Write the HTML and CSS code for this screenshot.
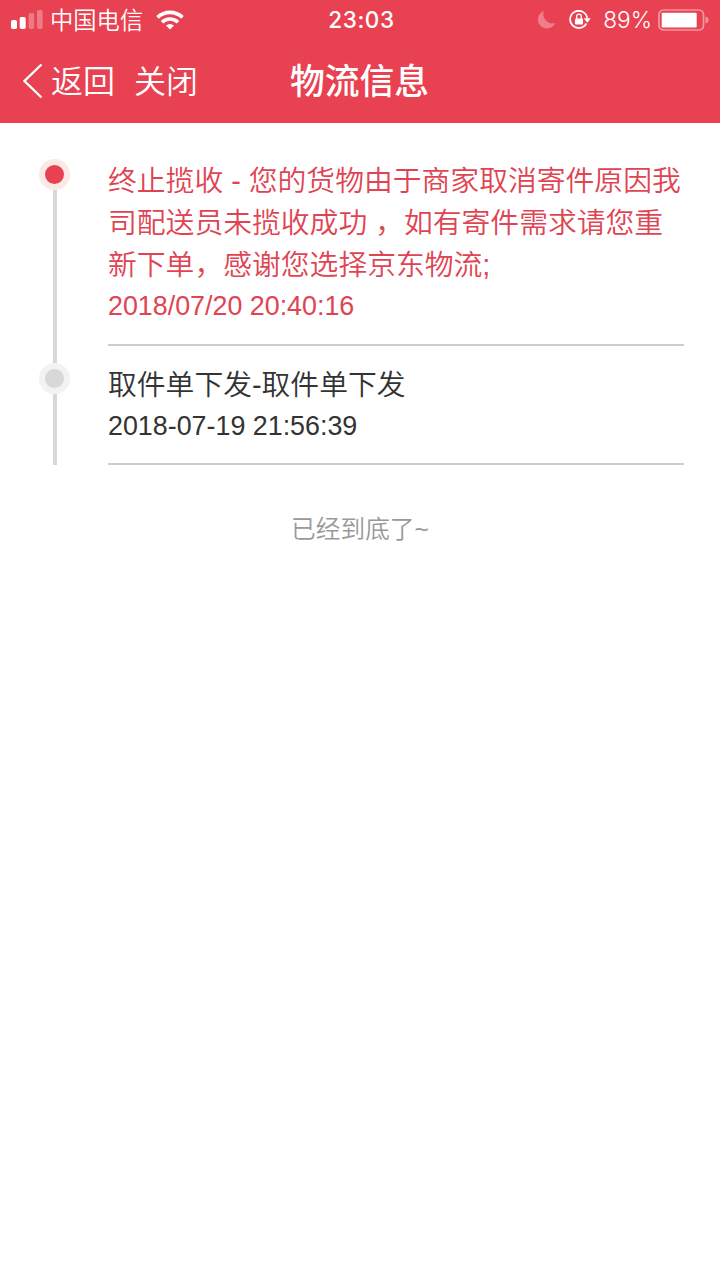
FILE: index.html
```html
<!DOCTYPE html>
<html lang="zh-CN">
<head>
<meta charset="utf-8">
<title>物流信息</title>
<link rel="stylesheet" href="styles.css">
</head>
<body>
<header class="header">
  <div class="status">
    <div class="status-left">
      <svg class="signal" width="32" height="20" viewBox="0 0 32 20" fill="#fff"><rect x="0" y="10" width="6" height="9" rx="1.8"/><rect x="8.7" y="7" width="6" height="12" rx="1.8"/><rect x="17.6" y="3" width="5.6" height="16" rx="1.8" opacity=".3"/><rect x="26" y="0" width="5.6" height="19" rx="1.8" opacity=".3"/></svg>
      <span class="carrier">中国电信</span>
      <svg class="wifi" width="28" height="20" viewBox="0 0 28 20" fill="none" stroke="#fff" stroke-width="3.6"><path d="M1.5 7.4a18 18 0 0 1 25 0"/><path d="M6 12.2a11.5 11.5 0 0 1 16 0"/><path d="M14 19.5l-4-4q4-3.2 8 0z" fill="#fff" stroke="none"/></svg>
    </div>
    <time class="clock">23:03</time>
    <div class="status-right">
      <svg class="moon" width="18" height="18" viewBox="0 0 18 18" fill="#fff" opacity=".32"><path d="M6 0A9 9 0 1 0 17.3 11.8 9 9 0 0 1 6 0z"/></svg>
      <svg class="lock" width="22" height="20" viewBox="0 0 22 20"><path d="M17.3 13.5A8.6 8.6 0 1 1 18.2 8" fill="none" stroke="#fff" stroke-width="1.7"/><path d="M14.7 8.2h7.1l-3.5 4.6z" fill="#fff"/><rect x="6" y="8.4" width="8" height="6" rx="1" fill="#fff"/><path d="M7.7 9V6.5a2.3 2.3 0 0 1 4.6 0V9" fill="none" stroke="#fff" stroke-width="1.3"/></svg>
      <span class="percent">89%</span>
      <svg class="battery" width="51" height="22" viewBox="0 0 51 22" fill="#fff"><rect x="1" y="1" width="44.5" height="20" rx="4.5" fill="none" stroke="#fff" stroke-width="1.7" opacity=".45"/><rect x="3.7" y="3.7" width="35" height="14.8" rx="1"/><path d="M47.5 7.5q3 1 3 3.5t-3 3.5z" opacity=".45"/></svg>
    </div>
  </div>
  <nav class="nav">
    <div class="nav-left">
      <svg class="chevron" width="20" height="36" viewBox="0 0 20 36" fill="none" stroke="#fff" stroke-width="2.3"><path d="M18.5 1.5L1.5 18l17 16.5"/></svg>
      <span>返回</span><span class="close">关闭</span>
    </div>
    <h1 class="title">物流信息</h1>
    <div></div>
  </nav>
</header>
<main class="timeline">
  <section class="entry active">
    <div class="rail"><span class="dot"></span></div>
    <div class="content">
      <p class="message">终止揽收 - 您的货物由于商家取消寄件原因我<br>司配送员未揽收成功 ，如有寄件需求请您重<br>新下单，感谢您选择京东物流;</p>
      <time class="date">2018/07/20 20:40:16</time>
    </div>
  </section>
  <section class="entry">
    <div class="rail"><span class="dot"></span></div>
    <div class="content">
      <p class="message">取件单下发-取件单下发</p>
      <time class="date">2018-07-19 21:56:39</time>
    </div>
  </section>
</main>
<p class="end">已经到底了~</p>
</body>
</html>
```
FILE: styles.css
```css
* { box-sizing: border-box; }
body {
  margin: 0;
  background: #fff;
  font-family: "Liberation Sans", "Noto Sans CJK SC", sans-serif;
  font-weight: 350;
  color: #333;
}
svg { display: block; flex: none; }
p, h1 { margin: 0; }
.header {
  height: 123px;
  background: #e84151;
  color: #fff;
}
.status {
  display: grid;
  grid-template-columns: 1fr auto 1fr;
  align-items: center;
  height: 40px;
  padding: 0 11px 0 11px;
}
.status-left, .status-right { display: flex; align-items: center; }
.status-right { justify-content: flex-end; }
.carrier {
  margin-left: 7px;
  padding-top: 2px;
  font-size: 23.3px;
  line-height: 38px;
}
.wifi { margin-left: 13px; }
.clock {
  padding-left: 3px;
  font: 500 22.5px/40px Inter, sans-serif;
  letter-spacing: .6px;
}
.lock { margin-left: 13px; }
.percent {
  margin-left: 12px;
  font: 350 22.7px/40px Inter, sans-serif;
}
.battery { margin-left: 6px; }
.nav {
  display: grid;
  grid-template-columns: 1fr auto 1fr;
  align-items: center;
  height: 82px;
  padding: 0 24px 0 23px;
}
.nav-left {
  display: flex;
  align-items: center;
  font-size: 32px;
  line-height: 46px;
}
.nav-left span { margin-left: 8px; padding-top: 2px; }
.nav-left .close { margin-left: 19px; }
.title {
  padding-top: 2px;
  font-size: 34.8px;
  line-height: 50px;
  font-weight: 500;
}
.timeline { padding: 36px 36px 0 39px; }
.entry { display: flex; }
.rail {
  display: flex;
  flex-direction: column;
  align-items: center;
  width: 31px;
  margin-right: 38px;
}
.rail::after {
  content: "";
  flex: 1;
  width: 4px;
  background: #d8d8d8;
}
.dot {
  width: 31px;
  height: 31px;
  border: 6px solid #f2f2f2;
  border-radius: 50%;
  background: #d8d8d8;
}
.active .dot { border-color: #fae9e4; background: #e84151; }
.content {
  flex: 1;
  height: 102px;
  border-bottom: 2px solid #ccc;
}
.active .content {
  height: 187px;
  margin-bottom: 17px;
  color: #df4453;
}
.active .rail { height: 204px; }
.message {
  padding-top: 1px;
  font-size: 28.8px;
  line-height: 42.2px;
  white-space: nowrap;
}
.active .message { margin-bottom: -1px; }
.date {
  display: block;
  font-size: 26.85px;
  line-height: 40px;
}
.end {
  margin-top: 47px;
  text-align: center;
  font-size: 24.7px;
  line-height: 36px;
  color: #999;
}
```
